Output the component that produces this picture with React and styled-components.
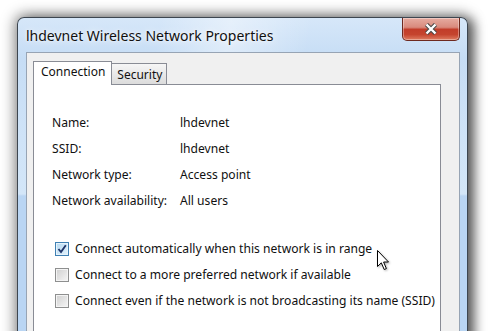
import React from 'react'
import styled, { createGlobalStyle } from 'styled-components'

const GlobalStyle = createGlobalStyle`
  html, body {
    margin: 0;
    background: #ffffff;
    overflow: hidden;
  }
`

const Stage = styled.div`
  position: relative;
  height: 331px;
  padding: 17px 0 0 17px;
  box-sizing: border-box;
  overflow: hidden;
  font-family: "Noto Sans", "Open Sans", sans-serif;
`

const Window = styled.div`
  width: 451px;
  height: 340px;
  box-sizing: border-box;
  display: flex;
  flex-direction: column;
  border: 1px solid #3d4650;
  border-bottom: none;
  border-radius: 7px 7px 0 0;
  background:
    linear-gradient(100deg, rgba(255,255,255,0) 28%, rgba(255,255,255,0.4) 42%, rgba(255,255,255,0) 58%),
    linear-gradient(to bottom, #d6e7f9 0, #c6ddf5 40px, #cfe3f7 120px, #d3e6f8 176px, #b9d5f3 178px, #b9d5f3 100%);
  box-shadow: 0 0 14px 3px rgba(0, 0, 0, 0.4), 6px 2px 12px rgba(0, 0, 0, 0.5);
`

const TitleBar = styled.div`
  display: flex;
  align-items: flex-start;
  height: 34px;
  flex-shrink: 0;
`

const Title = styled.div`
  flex: 1;
  padding: 8px 0 0 8px;
  font-size: 14px;
  line-height: 19px;
  color: #101010;
  text-shadow: 0 0 8px rgba(255, 255, 255, 0.95), 0 0 3px rgba(255, 255, 255, 0.9);
  white-space: nowrap;
`

const CloseButton = styled.div`
  width: 58px;
  height: 23px;
  margin-right: 7px;
  box-sizing: border-box;
  display: flex;
  align-items: center;
  justify-content: center;
  border: 1px solid #6e2a20;
  border-top: none;
  border-radius: 0 0 5px 5px;
  background: linear-gradient(to bottom, #e6aca1 0%, #d98a7d 42%, #c23d2a 52%, #c5442e 75%, #de7d62 100%);
  box-shadow: inset 0 0 0 1px rgba(255, 255, 255, 0.35);
`

const Client = styled.div`
  flex: 1;
  display: flex;
  flex-direction: column;
  margin: 0 7px 0 8px;
  padding: 8px 9px 0 6px;
  border: 1px solid #97a4b4;
  border-bottom: none;
  background: #f0f0f0;
`

const TabStrip = styled.div`
  display: flex;
  align-items: flex-end;
  height: 23px;
  flex-shrink: 0;
`

const Tab = styled.div`
  position: relative;
  box-sizing: border-box;
  height: ${({ $active }) => ($active ? '24px' : '21px')};
  padding: ${({ $active }) => ($active ? '2px 6px 0 7px' : '3px 4px 0 5px')};
  margin: ${({ $active }) => ($active ? '0 0 -1px 0' : '0 0 0 -1px')};
  z-index: ${({ $active }) => ($active ? 1 : 0)};
  border: 1px solid #898c95;
  border-bottom: none;
  background: ${({ $active }) => ($active ? '#ffffff' : 'linear-gradient(to bottom, #f6f6f6, #e6e6e6 60%, #dcdcdc)')};
  font-size: 12px;
  line-height: 16px;
  color: #111;
  white-space: nowrap;
`

const Panel = styled.div`
  flex: 1;
  margin-right: 9px;
  padding: 25px 0 0 18px;
  border: 1px solid #898c95;
  border-bottom: none;
  background: #ffffff;
  font-size: 12.1px;
  color: #101010;
`

const InfoGrid = styled.div`
  display: grid;
  grid-template-columns: 128px auto;
  grid-auto-rows: 26px;
  align-items: center;
  line-height: 16px;
`

const Options = styled.div`
  margin-top: 22px;
  display: flex;
  flex-direction: column;
`

const OptionRow = styled.label`
  display: flex;
  align-items: center;
  gap: 6px;
  height: 26px;
  line-height: 16px;
  white-space: nowrap;
`

const Box = styled.span`
  width: 14px;
  height: 14px;
  margin-left: 3px;
  box-sizing: border-box;
  display: flex;
  align-items: center;
  justify-content: center;
  border: 1px solid ${({ $checked }) => ($checked ? '#3f80b3' : '#8e8f8f')};
  box-shadow: inset 0 0 0 1px ${({ $checked }) => ($checked ? '#e6f3fb' : '#f4f4f4')};
  background: ${({ $checked }) =>
    $checked
      ? 'linear-gradient(135deg, #b5d9f2, #e3f2fc)'
      : 'linear-gradient(135deg, #cfcfcf, #f6f6f6)'};
`

const Pointer = styled.svg`
  position: absolute;
  left: 377px;
  top: 250px;
  filter: drop-shadow(1px 1px 1px rgba(0, 0, 0, 0.3));
`

const info = [
  ['Name:', 'lhdevnet'],
  ['SSID:', 'lhdevnet'],
  ['Network type:', 'Access point'],
  ['Network availability:', 'All users'],
]

const options = [
  { text: 'Connect automatically when this network is in range', checked: true },
  { text: 'Connect to a more preferred network if available', checked: false },
  { text: 'Connect even if the network is not broadcasting its name (SSID)', checked: false },
]

const CloseGlyph = () => (
  <svg width="14" height="12" viewBox="0 0 14 12">
    <path d="M2.5 1.5 L11.5 10.5 M11.5 1.5 L2.5 10.5" stroke="#4a4a4a" strokeWidth="4.4" fill="none" />
    <path d="M2.5 1.5 L11.5 10.5 M11.5 1.5 L2.5 10.5" stroke="#ffffff" strokeWidth="2.4" fill="none" />
  </svg>
)

const CheckMark = () => (
  <svg width="10" height="10" viewBox="0 0 10 10">
    <path d="M1.5 5 L4 8 L8.8 1.2" stroke="#1f3468" strokeWidth="1.9" fill="none" />
  </svg>
)

export default function App() {
  return (
    <>
      <GlobalStyle />
      <Stage>
        <Window>
          <TitleBar>
            <Title>lhdevnet Wireless Network Properties</Title>
            <CloseButton>
              <CloseGlyph />
            </CloseButton>
          </TitleBar>
          <Client>
            <TabStrip>
              <Tab $active>Connection</Tab>
              <Tab>Security</Tab>
            </TabStrip>
            <Panel>
              <InfoGrid>
                {info.map(([label, value]) => (
                  <React.Fragment key={label}>
                    <span>{label}</span>
                    <span>{value}</span>
                  </React.Fragment>
                ))}
              </InfoGrid>
              <Options>
                {options.map(o => (
                  <OptionRow key={o.text}>
                    <Box $checked={o.checked}>{o.checked && <CheckMark />}</Box>
                    {o.text}
                  </OptionRow>
                ))}
              </Options>
            </Panel>
          </Client>
        </Window>
        <Pointer width="13" height="21" viewBox="0 0 13 21">
          <path d="M0.5 0.5 V16.5 L4.3 12.8 L7.2 19.5 L9.4 18.6 L6.6 12 H11.5 Z" fill="#ffffff" stroke="#000000" strokeWidth="1" />
        </Pointer>
      </Stage>
    </>
  )
}
